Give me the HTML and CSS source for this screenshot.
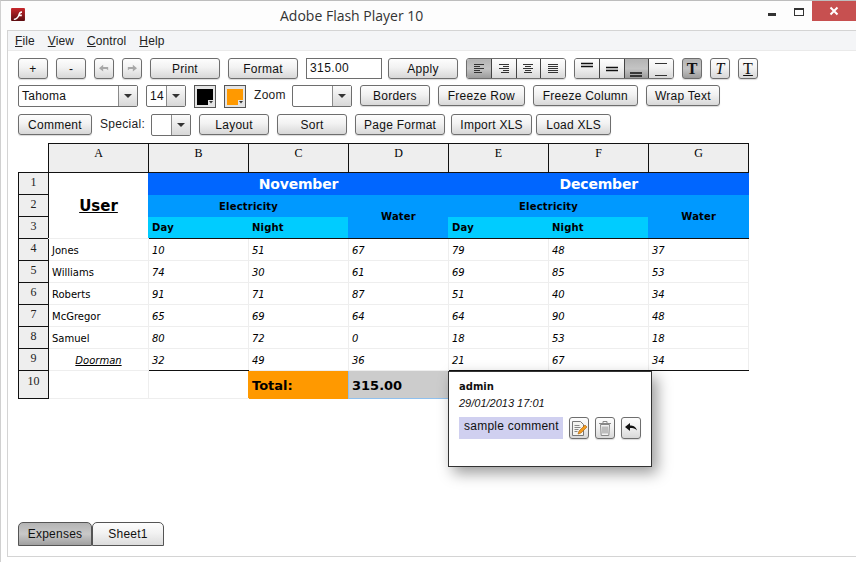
FILE: index.html
```html
<!DOCTYPE html>
<html lang="en">
<head>
    <meta charset="UTF-8">
    <title>Adobe Flash Player 10</title>
    <link rel="stylesheet" href="styles.css">
</head>
<body>
    <div class="window">
        <div class="titlebar">
            <svg class="flash-logo" width="14" height="13" viewBox="0 0 15 14">
                <defs>
                    <linearGradient id="flashRed" x1="0" y1="0" x2="0" y2="1">
                        <stop offset="0" stop-color="#c8272c"/>
                        <stop offset="1" stop-color="#5c0c10"/>
                    </linearGradient>
                </defs>
                <rect width="15" height="14" rx="1" fill="url(#flashRed)"/>
                <path d="M3 11.500c3 0 4-2 5-5 .5-1.500 1.500-3 3.800-3v2c-1.300 0-1.800.7-2.200 1.500h2v2h-2.800c-1 2-2.500 4-5.800 4z" fill="#fff"/>
            </svg>
            <span class="title">Adobe Flash Player 10</span>
            <div class="win-controls">
                <span class="win-min"></span>
                <span class="win-max"></span>
                <span class="win-close">
                    <svg width="10" height="10" viewBox="0 0 10 10"><path d="M1.500 1.500l7 7M8.500 1.500l-7 7" stroke="#fff" stroke-width="2"/></svg>
                </span>
            </div>
        </div>

        <div class="frame">
            <div class="menu">
                <span class="menu-item"><u>F</u>ile</span>
                <span class="menu-item"><u>V</u>iew</span>
                <span class="menu-item"><u>C</u>ontrol</span>
                <span class="menu-item"><u>H</u>elp</span>
            </div>

            <div class="toolbar toolbar-first">
                <button class="btn w30">+</button>
                <button class="btn w30">-</button>
                <button class="btn w20 icon-btn">
                    <svg width="12" height="10" viewBox="0 0 14 12"><path d="M1 5l5-4v2.500h6v4l-2-1.500H6V9z" fill="#a8a8a8"/></svg>
                </button>
                <button class="btn w20 icon-btn">
                    <svg width="12" height="10" viewBox="0 0 14 12"><path d="M13 5L8 1v2.500H2v4l2-1.500h4V9z" fill="#a8a8a8"/></svg>
                </button>
                <button class="btn w70">Print</button>
                <button class="btn w70">Format</button>
                <div class="value-input">315.00</div>
                <button class="btn w70 tight">Apply</button>
                <div class="btn-group">
                    <button class="seg on"><svg width="12" height="11" viewBox="0 0 12 11"><path d="M1 1.500h10M1 3.500h6M1 5.500h10M1 7.500h6M1 9.500h8" stroke="#333"/></svg></button>
                    <button class="seg"><svg width="12" height="11" viewBox="0 0 12 11"><path d="M1 1.500h10M5 3.500h6M1 5.500h10M5 7.500h6M3 9.500h8" stroke="#333"/></svg></button>
                    <button class="seg"><svg width="12" height="11" viewBox="0 0 12 11"><path d="M1 1.500h10M3 3.500h6M1 5.500h10M3 7.500h6M2 9.500h8" stroke="#333"/></svg></button>
                    <button class="seg"><svg width="12" height="11" viewBox="0 0 12 11"><path d="M1 1.500h10M1 3.500h10M1 5.500h10M1 7.500h10M1 9.500h10" stroke="#333"/></svg></button>
                </div>
                <div class="btn-group">
                    <button class="seg"><svg width="12" height="16" viewBox="0 0 12 16"><path d="M0 2.500h12M0 5.500h12" stroke="#111" stroke-width="1.300"/></svg></button>
                    <button class="seg"><svg width="12" height="16" viewBox="0 0 12 16"><path d="M0 6.500h12M0 9.500h12" stroke="#111" stroke-width="1.300"/></svg></button>
                    <button class="seg on"><svg width="12" height="16" viewBox="0 0 12 16"><path d="M0 12h12M0 15h12" stroke="#111" stroke-width="1.300"/></svg></button>
                    <button class="seg"><svg width="12" height="16" viewBox="0 0 12 16"><path d="M0 2.500h12M0 14.500h12" stroke="#333"/></svg></button>
                </div>
                <button class="btn w20 style-btn on bold-t">T</button>
                <button class="btn w20 style-btn italic-t">T</button>
                <button class="btn w20 style-btn under-t">T</button>
            </div>

            <div class="toolbar">
                <div class="combo w120"><span class="combo-text">Tahoma</span><span class="combo-arrow"></span></div>
                <div class="combo w40"><span class="combo-text">14</span><span class="combo-arrow"></span></div>
                <button class="swatch">
                    <svg width="16" height="16" viewBox="0 0 16 16"><path d="M0 0h16v11h-5v5H0z" fill="#000"/><path d="M12 12h4l-2 2.500z" fill="#333"/></svg>
                </button>
                <button class="swatch">
                    <svg width="16" height="16" viewBox="0 0 16 16"><path d="M0 0h16v11h-5v5H0z" fill="#f90"/><path d="M12 12h4l-2 2.500z" fill="#333"/></svg>
                </button>
                <span class="label">Zoom</span>
                <div class="combo w60 tight"><span class="combo-text"></span><span class="combo-arrow"></span></div>
                <button class="btn w70">Borders</button>
                <button class="btn w87">Freeze Row</button>
                <button class="btn w105">Freeze Column</button>
                <button class="btn w74">Wrap Text</button>
            </div>

            <div class="toolbar">
                <button class="btn w74">Comment</button>
                <span class="label">Special:</span>
                <div class="combo w40 tight"><span class="combo-text"></span><span class="combo-arrow"></span></div>
                <button class="btn w70">Layout</button>
                <button class="btn w70">Sort</button>
                <button class="btn w90">Page Format</button>
                <button class="btn w81 tight">Import XLS</button>
                <button class="btn w75 tighter">Load XLS</button>
            </div>

            <table class="sheet">
                <colgroup>
                    <col class="col-num">
                    <col class="col-data"><col class="col-data"><col class="col-data"><col class="col-data">
                    <col class="col-data"><col class="col-data"><col class="col-data">
                </colgroup>
                <tr class="head-row">
                    <td class="corner"></td>
                    <th>A</th><th>B</th><th>C</th><th>D</th><th>E</th><th>F</th><th>G</th>
                </tr>
                <tr>
                    <td class="num">1</td>
                    <td class="user" rowspan="3"><span>User</span></td>
                    <td class="month" colspan="3">November</td>
                    <td class="month" colspan="3">December</td>
                </tr>
                <tr>
                    <td class="num">2</td>
                    <td class="group" colspan="2">Electricity</td>
                    <td class="group water" rowspan="2">Water</td>
                    <td class="group" colspan="2">Electricity</td>
                    <td class="group water" rowspan="2">Water</td>
                </tr>
                <tr>
                    <td class="num">3</td>
                    <td class="sub">Day</td><td class="sub">Night</td>
                    <td class="sub">Day</td><td class="sub">Night</td>
                </tr>
                <tr class="row-first">
                    <td class="num">4</td><td class="name">Jones</td>
                    <td class="val first">10</td><td class="val">51</td><td class="val">67</td><td class="val">79</td><td class="val">48</td><td class="val">37</td>
                </tr>
                <tr>
                    <td class="num">5</td><td class="name">Williams</td>
                    <td class="val first">74</td><td class="val">30</td><td class="val">61</td><td class="val">69</td><td class="val">85</td><td class="val">53</td>
                </tr>
                <tr>
                    <td class="num">6</td><td class="name">Roberts</td>
                    <td class="val first">91</td><td class="val">71</td><td class="val">87</td><td class="val">51</td><td class="val">40</td><td class="val">34</td>
                </tr>
                <tr>
                    <td class="num">7</td><td class="name">McGregor</td>
                    <td class="val first">65</td><td class="val">69</td><td class="val">64</td><td class="val">64</td><td class="val">90</td><td class="val">48</td>
                </tr>
                <tr>
                    <td class="num">8</td><td class="name">Samuel</td>
                    <td class="val first">80</td><td class="val">72</td><td class="val">0</td><td class="val">18</td><td class="val">53</td><td class="val">18</td>
                </tr>
                <tr>
                    <td class="num">9</td><td class="name doorman"><span>Doorman</span></td>
                    <td class="val first last">32</td><td class="val">49</td><td class="val">36</td><td class="val last">21</td><td class="val last">67</td><td class="val last">34</td>
                </tr>
                <tr class="total-row">
                    <td class="num">10</td><td class="blank"></td><td class="blank before-total"></td>
                    <td class="total-label">Total:</td>
                    <td class="total-value">315.00</td>
                    <td></td><td></td><td></td>
                </tr>
            </table>

            <div class="comment-pop">
                <div class="comment-user">admin</div>
                <div class="comment-date">29/01/2013 17:01</div>
                <div class="comment-row">
                    <span class="comment-text">sample comment</span>
                    <button class="btn pop-btn">
                        <svg width="16" height="17" viewBox="0 0 16 17">
                            <path d="M1.500 1.500h8l3 3v11h-11z" fill="#f4f4f0" stroke="#777"/>
                            <path d="M3.500 5.500h5M3.500 7.500h6M3.500 9.500h4M3.500 11.500h3" stroke="#888"/>
                            <path d="M7 14l1-3 6-6 2 2-6 6z" fill="#f29a1c" stroke="#a8600c" stroke-width=".6"/>
                        </svg>
                    </button>
                    <button class="btn pop-btn">
                        <svg width="14" height="17" viewBox="0 0 14 17">
                            <path d="M2.500 4.500h9l-.7 11H3.200z" fill="#f2f2f2" stroke="#888"/>
                            <path d="M1 3.500h12M5 1.500h4v2H5zM5 6.500v7M7 6.500v7M9 6.500v7" stroke="#888" fill="none"/>
                        </svg>
                    </button>
                    <button class="btn pop-btn">
                        <svg width="12" height="10" viewBox="0 0 12 10"><path d="M0 4l5-4v2.500c3 0 6 1 7 5-1.500-2-4-2.500-7-2.500V8z" fill="#111"/></svg>
                    </button>
                </div>
            </div>

            <div class="tabs">
                <button class="tab active">Expenses</button>
                <button class="tab">Sheet1</button>
            </div>
        </div>
    </div>
</body>
</html>
```

FILE: styles.css
```css
html, body {
    margin: 0;
    height: 100%;
    overflow: hidden;
}
body {
    font-family: "Liberation Sans", Arial, sans-serif;
    font-size: 12px;
    color: #111;
    background-color: #fff;
}
button {
    font-family: inherit;
    padding: 0;
}
.window {
    display: flex;
    flex-direction: column;
    height: 562px;
    box-sizing: border-box;
    border-top: 1px solid #bdbdbd;
    border-left: 1px solid #d0d0d0;
}

/* title bar */
.titlebar {
    display: flex;
    align-items: flex-start;
    height: 29px;
    flex-shrink: 0;
    background-color: #fdfdfd;
}
.flash-logo {
    margin: 7px 0 0 10px;
}
.title {
    margin: 4px 0 0 255px;
    font-family: "Open Sans", sans-serif;
    font-size: 14px;
    line-height: 22px;
    color: #333;
}
.win-controls {
    display: flex;
    align-items: flex-start;
    margin-left: auto;
}
.win-min {
    width: 8px;
    height: 3px;
    margin: 12px 18px 0 0;
    background-color: #333;
}
.win-max {
    box-sizing: border-box;
    width: 10px;
    height: 8px;
    margin: 7px 8px 0 0;
    border: 1px solid #333;
    border-top-width: 2px;
}
.win-close {
    display: flex;
    align-items: center;
    justify-content: center;
    width: 44px;
    height: 20px;
    background-color: #c75050;
}

/* main frame */
.frame {
    position: relative;
    display: flex;
    flex-direction: column;
    height: 525px;
    margin-left: 6px;
    border-top: 1px solid #d4d4d4;
    border-left: 1px solid #d4d4d4;
    border-bottom: 1px solid #d4d4d4;
}
.menu {
    display: flex;
    height: 19px;
    flex-shrink: 0;
    padding-left: 7px;
    line-height: 20px;
    background-color: #f4f5f7;
    border-bottom: 1px solid #eaeaea;
    letter-spacing: 0.1px;
    color: #222;
}
.menu-item {
    margin-right: 13px;
}

/* toolbars */
.toolbar {
    display: flex;
    align-items: flex-start;
    gap: 8px;
    height: 22px;
    flex-shrink: 0;
    margin-left: 10px;
    margin-bottom: 7px;
}
.toolbar-first {
    margin-top: 7px;
    margin-bottom: 5px;
}
.btn {
    box-sizing: border-box;
    height: 21px;
    border: 1px solid #6e6e6e;
    border-radius: 3px;
    background: linear-gradient(#fdfdfd, #f2f2f2 45%, #d8d8d8);
    box-shadow: 0 1px 1px rgba(0, 0, 0, 0.15);
    font-size: 12px;
    letter-spacing: 0.25px;
    color: #111;
}
.w20 { width: 20px; }
.w30 { width: 30px; }
.w40 { width: 40px; }
.w60 { width: 60px; }
.w70 { width: 70px; }
.w74 { width: 74px; }
.w75 { width: 75px; }
.w81 { width: 81px; }
.w87 { width: 87px; }
.w90 { width: 90px; }
.w105 { width: 105px; }
.w120 { width: 120px; }
.tight { margin-left: -2px; }
.tighter { margin-left: -4px; }
.icon-btn {
    display: flex;
    align-items: center;
    justify-content: center;
}
.value-input {
    box-sizing: border-box;
    width: 76px;
    height: 21px;
    padding-left: 3px;
    line-height: 19px;
    border: 1px solid #6e6e6e;
    background-color: #fff;
    font-size: 12px;
    letter-spacing: 0.4px;
}
.btn-group {
    display: flex;
    box-sizing: border-box;
    width: 100px;
    height: 21px;
    border: 1px solid #6e6e6e;
    border-radius: 3px;
    overflow: hidden;
    box-shadow: 0 1px 1px rgba(0, 0, 0, 0.15);
}
.seg {
    flex: 1;
    display: flex;
    align-items: center;
    justify-content: center;
    border: none;
    border-left: 1px solid #444;
    background: linear-gradient(#fdfdfd, #f2f2f2 45%, #d8d8d8);
}
.seg:first-child {
    border-left: none;
}
.seg.on, .btn.on {
    background: linear-gradient(#b4b4b4, #c4c4c4 50%, #9c9c9c);
}
.style-btn {
    font-family: "Liberation Serif", serif;
    font-size: 16px;
    line-height: 17px;
    letter-spacing: 0;
}
.bold-t { font-weight: bold; }
.italic-t { font-style: italic; }
.under-t { text-decoration: underline; }
.combo {
    display: flex;
    box-sizing: border-box;
    height: 22px;
    border: 1px solid #6e6e6e;
    border-radius: 2px;
    background-color: #fff;
}
.combo-text {
    flex: 1;
    padding-left: 3px;
    line-height: 21px;
    font-size: 12px;
    letter-spacing: 0.25px;
}
.combo-arrow {
    position: relative;
    width: 18px;
    border-left: 1px solid #8a8a8a;
    background: linear-gradient(#fbfbfb, #d8d8d8);
}
.combo-arrow::after {
    content: "";
    position: absolute;
    left: 5px;
    top: 8px;
    border-left: 4px solid transparent;
    border-right: 4px solid transparent;
    border-top: 4px solid #333;
}
.swatch {
    display: flex;
    align-items: center;
    justify-content: center;
    box-sizing: border-box;
    width: 22px;
    height: 23px;
    border: 1px solid #555;
    background-color: #e4e4e4;
}
.label {
    font-size: 12px;
    line-height: 21px;
    letter-spacing: 0.3px;
    color: #222;
}

/* spreadsheet */
.sheet {
    width: 730px;
    margin-left: 10px;
    table-layout: fixed;
    border-collapse: collapse;
    font-family: "DejaVu Sans", sans-serif;
    font-size: 10px;
    color: #000;
}
.col-num { width: 30px; }
.col-data { width: 100px; }
.sheet tr {
    height: 22px;
}
.sheet td {
    padding: 1px 3px 0;
    overflow: hidden;
    white-space: nowrap;
}
.sheet .head-row {
    height: 29px;
}
.sheet .total-row {
    height: 28px;
}
.sheet th {
    padding: 0 0 10px;
    border: 1px solid #111;
    background-color: #eee;
    font-family: "Liberation Serif", serif;
    font-size: 12px;
    font-weight: normal;
}
.sheet .num {
    padding: 0 0 2px;
    border: 1px solid #111;
    background-color: #eee;
    font-family: "Liberation Serif", serif;
    font-size: 12px;
    text-align: center;
    color: #222;
}
.sheet .total-row .num {
    padding-bottom: 6px;
}
.sheet .corner {
    border: none;
    border-bottom: 1px solid #111;
}
.user {
    text-align: center;
    font-size: 15px;
    font-weight: bold;
    text-decoration: underline;
    border-bottom: 1px solid #eee;
}
.month {
    background-color: #06f;
    border-left: 1px solid #06f;
    border-top: 1px solid #111;
    color: #fff;
    font-size: 14px;
    font-weight: bold;
    text-align: center;
    letter-spacing: -0.2px;
}
.group {
    background-color: #09f;
    border-left: 1px solid #09f;
    font-weight: bold;
    font-size: 10px;
    letter-spacing: 0.2px;
    text-align: center;
}
.water {
    border-bottom: 1px solid #111;
}
.sheet .sub {
    background-color: #0cf;
    border-left: 1px solid #0cf;
    border-bottom: 1px solid #111;
    font-weight: bold;
    font-size: 10px;
    letter-spacing: 0.2px;
}
.name {
    border: 1px solid #eee;
    border-top: none;
}
.doorman {
    text-align: center;
    font-style: italic;
    text-decoration: underline;
}
.val {
    border: 1px solid #eee;
    font-style: italic;
}
.row-first .val {
    border-top-color: #111;
}
.val.first {
    border-left: 1px solid #111;
}
.val.last {
    border-bottom: 1px solid #111;
}
.blank {
    border: 1px solid #eee;
}
.blank.before-total {
    border-right-color: #f90;
}
.sheet .total-label {
    background-color: #f90;
    border-left: 1px solid #f90;
    font-size: 13px;
    font-weight: bold;
}
.sheet .total-value {
    background-color: #ccc;
    border: 1px solid #8fc0ee;
    font-size: 13px;
    font-weight: bold;
}

/* comment popup */
.comment-pop {
    position: absolute;
    left: 440px;
    top: 340px;
    box-sizing: border-box;
    width: 204px;
    height: 96px;
    padding: 8px 10px;
    background-color: #fff;
    border: 1px solid #333;
    box-shadow: 5px 6px 14px rgba(0, 0, 0, 0.4);
}
.comment-user {
    font-family: "DejaVu Sans", sans-serif;
    font-size: 10px;
    font-weight: bold;
    line-height: 13px;
}
.comment-date {
    margin-top: 4px;
    font-size: 11px;
    font-style: italic;
    line-height: 13px;
}
.comment-row {
    display: flex;
    gap: 6px;
    margin-top: 7px;
}
.comment-text {
    width: 104px;
    height: 22px;
    padding-left: 5px;
    box-sizing: border-box;
    line-height: 19px;
    background-color: #d0d0f0;
    font-size: 12px;
    letter-spacing: 0.25px;
}
.pop-btn {
    display: flex;
    align-items: center;
    justify-content: center;
    width: 20px;
    height: 22px;
}

/* sheet tabs */
.tabs {
    display: flex;
    margin-top: auto;
    margin-left: 10px;
    margin-bottom: 10px;
}
.tab {
    box-sizing: border-box;
    width: 72px;
    height: 24px;
    border: 1px solid #555;
    border-radius: 5px 5px 0 0;
    background: linear-gradient(#fdfdfd, #f2f2f2 45%, #dcdcdc);
    font-size: 12px;
    letter-spacing: 0.25px;
    color: #111;
}
.tab.active {
    width: 74px;
    background: linear-gradient(#b4b4b4, #c8c8c8 50%, #a0a0a0);
}
```
